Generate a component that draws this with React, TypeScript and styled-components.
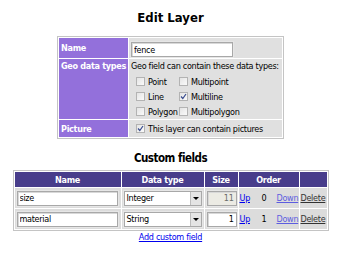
import React from 'react';
import styled, { createGlobalStyle } from 'styled-components';

const Global = createGlobalStyle`
  html, body { margin: 0; padding: 0; background: #fff; }
  body {
    font-family: "DejaVu Sans Condensed", "DejaVu Sans", sans-serif;
    font-size: 9px;
    letter-spacing: -0.3px;
    color: #000;
  }
`;

const Page = styled.div`
  width: 341px;
  display: flex;
  flex-direction: column;
  align-items: center;
  padding-top: 10px;
`;

const Heading = styled.h1<{ $mt?: number; $size: number; $ls: number }>`
  font-size: ${p => p.$size}px;
  letter-spacing: ${p => p.$ls}px;
  line-height: 16px;
  font-weight: bold;
  margin: ${p => p.$mt ?? 0}px 0 0 0;
`;

const Table = styled.table<{ $w: number; $mt: number }>`
  width: ${p => p.$w}px;
  margin-top: ${p => p.$mt}px;
  border: 1px solid #c4c4c4;
  border-collapse: separate;
  border-spacing: 1px;
  background: #fff;
  table-layout: fixed;
`;

const Label = styled.td<{ $h: number }>`
  width: 69px;
  height: ${p => p.$h}px;
  background: #9370db;
  color: #fff;
  font-weight: bold;
  padding: 0 0 0 2px;
  vertical-align: ${p => (p.$h > 30 ? 'top' : 'middle')};
  line-height: ${p => (p.$h > 30 ? '15px' : 'normal')};
  white-space: nowrap;
  box-sizing: border-box;
`;

const Value = styled.td`
  background: #e0e0e0;
  padding: 0 0 0 2px;
  vertical-align: top;
`;

const TextInput = styled.input<{ $w: number; $align?: string; $disabled?: boolean }>`
  box-sizing: border-box;
  width: ${p => p.$w}px;
  height: 15px;
  margin: 0;
  padding: 0 2px;
  border: 1px solid #a8a8a8;
  box-shadow: inset 1px 1px 0 #d8d8d8, 0 0 0 1px #e6e6e6;
  background: ${p => (p.$disabled ? '#ecebe4' : '#fff')};
  color: ${p => (p.$disabled ? '#6d6d6d' : '#000')};
  font: inherit;
  letter-spacing: inherit;
  text-align: ${p => p.$align ?? 'left'};
  outline: none;
`;

const NameWrap = styled.div`
  padding-top: 4px;
`;

const GeoIntro = styled.div`
  line-height: 15px;
  white-space: nowrap;
`;

const CheckGrid = styled.div`
  display: grid;
  grid-template-columns: 43px auto;
  grid-auto-rows: 15px;
  padding-left: 5px;
`;

const CheckItem = styled.label`
  display: flex;
  align-items: center;
  white-space: nowrap;
`;

const Box = styled.span`
  box-sizing: border-box;
  display: inline-flex;
  align-items: center;
  justify-content: center;
  width: 9px;
  height: 9px;
  border: 1px solid #b3b3b3;
  background: linear-gradient(135deg, #e4e4e4, #fafafa);
  flex: none;
  margin-right: 3px;
`;

const Tick = styled.svg`
  width: 7px;
  height: 7px;
`;

const PictureRow = styled.div`
  display: flex;
  align-items: center;
  height: 17px;
  padding-left: 5px;
  white-space: nowrap;
`;

const HeadCell = styled.th<{ $w?: number }>`
  ${p => (p.$w ? `width: ${p.$w}px;` : '')}
  height: 15px;
  padding: 0;
  background: #483d8b;
  color: #fff;
  font-weight: bold;
  text-align: center;
`;

const Cell = styled.td`
  height: 20px;
  padding: 0 2px;
  background: #dcdcdc;
  white-space: nowrap;
  overflow: hidden;
`;

const LinkCell = styled(Cell)`
  padding: 0 1px;
`;

const SelectBox = styled.div`
  box-sizing: border-box;
  width: 78px;
  height: 15px;
  display: flex;
  align-items: stretch;
  border: 1px solid #a8a8a8;
  box-shadow: 0 0 0 1px #e6e6e6;
  background: #fff;
`;

const SelectText = styled.span`
  flex: 1;
  padding-left: 2px;
  line-height: 13px;
`;

const SelectArrow = styled.span`
  width: 10px;
  background: #e4e4e4;
  border-left: 1px solid #bdbdbd;
  display: flex;
  align-items: center;
  justify-content: center;
  &::after {
    content: '';
    border-left: 3px solid transparent;
    border-right: 3px solid transparent;
    border-top: 3px solid #000;
  }
`;

const OrderWrap = styled.div`
  display: grid;
  grid-template-columns: 22px 15px auto;
  align-items: center;
  justify-items: start;
`;

const Link = styled.a<{ $c: string }>`
  color: ${p => p.$c};
  text-decoration: underline;
  cursor: pointer;
`;

const AddLink = styled(Link)`
  margin-top: 1px;
`;

const fields = [
  { name: 'size', type: 'Integer', size: '11', disabled: true },
  { name: 'material', type: 'String', size: '1', disabled: false },
];

const TickMark = () => (
  <Tick viewBox="0 0 7 7">
    <path d="M1 3.5 L2.8 5.5 L6 1" fill="none" stroke="#3a4d8f" strokeWidth="1.2" />
  </Tick>
);

const Check = ({ label, on }: { label: string; on?: boolean }) => (
  <CheckItem>
    <Box>{on && <TickMark />}</Box>
    {label}
  </CheckItem>
);

export default function App() {
  return (
    <>
      <Global />
      <Page>
        <Heading $size={13} $ls={0}>Edit Layer</Heading>
        <Table $w={227} $mt={10}>
          <tbody>
            <tr>
              <Label $h={20}>Name</Label>
              <Value>
                <NameWrap>
                  <TextInput $w={102} defaultValue="fence" />
                </NameWrap>
              </Value>
            </tr>
            <tr>
              <Label $h={60}>Geo data types</Label>
              <Value>
                <GeoIntro>Geo field can contain these data types:</GeoIntro>
                <CheckGrid>
                  <Check label="Point" />
                  <Check label="Multipoint" />
                  <Check label="Line" />
                  <Check label="Multiline" on />
                  <Check label="Polygon" />
                  <Check label="Multipolygon" />
                </CheckGrid>
              </Value>
            </tr>
            <tr>
              <Label $h={17}>Picture</Label>
              <Value>
                <PictureRow>
                  <Box>
                    <TickMark />
                  </Box>
                  This layer can contain pictures
                </PictureRow>
              </Value>
            </tr>
          </tbody>
        </Table>
        <Heading $mt={11} $size={11.5} $ls={-0.5}>Custom fields</Heading>
        <Table $w={316} $mt={4}>
          <thead>
            <tr>
              <HeadCell $w={106}>Name</HeadCell>
              <HeadCell $w={82}>Data type</HeadCell>
              <HeadCell $w={33}>Size</HeadCell>
              <HeadCell $w={60}>Order</HeadCell>
              <HeadCell></HeadCell>
            </tr>
          </thead>
          <tbody>
            {fields.map((f, i) => (
              <tr key={f.name}>
                <Cell>
                  <TextInput $w={101} defaultValue={f.name} />
                </Cell>
                <Cell>
                  <SelectBox>
                    <SelectText>{f.type}</SelectText>
                    <SelectArrow />
                  </SelectBox>
                </Cell>
                <Cell>
                  <TextInput $w={30} $align="right" $disabled={f.disabled} defaultValue={f.size} readOnly={f.disabled} />
                </Cell>
                <LinkCell>
                  <OrderWrap>
                    <Link $c="#0000ee">Up</Link>
                    <span>{i}</span>
                    <Link $c="#5c5ce0">Down</Link>
                  </OrderWrap>
                </LinkCell>
                <LinkCell>
                  <Link $c="#333">Delete</Link>
                </LinkCell>
              </tr>
            ))}
          </tbody>
        </Table>
        <AddLink $c="#0000ee">Add custom field</AddLink>
      </Page>
    </>
  );
}
